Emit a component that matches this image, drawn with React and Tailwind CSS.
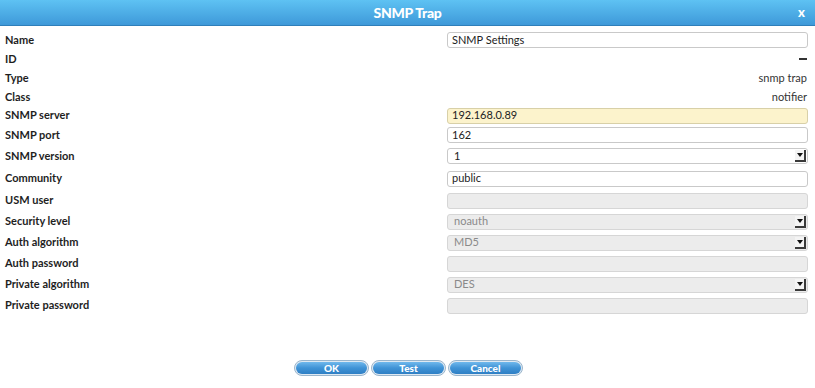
import React from 'react';

const rows = [
  { label: 'Name', h: 'h-[20px]', kind: 'input', value: 'SNMP Settings' },
  { label: 'ID', h: 'h-[18px]', kind: 'dash' },
  { label: 'Type', h: 'h-[20px]', kind: 'text', value: 'snmp trap' },
  { label: 'Class', h: 'h-[18px]', kind: 'text', value: 'notifier' },
  { label: 'SNMP server', h: 'h-[19px]', kind: 'input', value: '192.168.0.89', focus: true },
  { label: 'SNMP port', h: 'h-[20px]', kind: 'input', value: '162' },
  { label: 'SNMP version', h: 'h-[22px]', kind: 'select', value: '1' },
  { label: 'Community', h: 'h-[23px]', kind: 'input', value: 'public' },
  { label: 'USM user', h: 'h-[21px]', kind: 'input', value: '', disabled: true },
  { label: 'Security level', h: 'h-[21px]', kind: 'select', value: 'noauth', disabled: true },
  { label: 'Auth algorithm', h: 'h-[21px]', kind: 'select', value: 'MD5', disabled: true },
  { label: 'Auth password', h: 'h-[21px]', kind: 'input', value: '', disabled: true },
  { label: 'Private algorithm', h: 'h-[21px]', kind: 'select', value: 'DES', disabled: true },
  { label: 'Private password', h: 'h-[21px]', kind: 'input', value: '', disabled: true },
];

const SelectArrow = () => (
  <span className="absolute right-[1px] top-[1px] bottom-[1px] w-[11px] flex items-center justify-center border-r-2 border-b-2 border-[#3a3a3a] bg-[#f4f4f4]">
    <svg width="6" height="4" viewBox="0 0 6 4">
      <path d="M0 0 L6 0 L3 4 Z" fill="#111" />
    </svg>
  </span>
);

const Field = ({ row }) => {
  if (row.kind === 'dash') {
    return (
      <div className="w-full flex justify-end pr-[1px]">
        <span className="w-[8px] h-[2px] bg-[#333]" />
      </div>
    );
  }
  if (row.kind === 'text') {
    return <div className="w-full text-right text-[11px] text-[#333] pr-[1px]">{row.value}</div>;
  }
  const base = 'relative w-full h-[16px] rounded-[3px] border flex items-center pl-[4px] text-[11px]';
  let tone = 'bg-white border-[#c9c9c9] text-[#222]';
  if (row.focus) tone = 'bg-[#fcf3cc] border-[#d8d0a8] text-[#222]';
  if (row.disabled) tone = 'bg-[#ececec] border-[#d6d6d6] text-[#8a8a8a]';
  return (
    <div className={`${base} ${tone}`}>
      <span className={row.kind === 'select' ? 'pl-[2px]' : ''}>{row.value}</span>
      {row.kind === 'select' && <SelectArrow />}
    </div>
  );
};

const DialogButton = ({ children }) => (
  <button className="w-[75px] h-[16px] rounded-full border border-[#9ab5cc] p-[1px] bg-[#dfe9f2]">
    <span className="flex h-full w-full items-center justify-center rounded-full bg-gradient-to-b from-[#6fb8ec] via-[#3f93d6] to-[#2f7fc4] text-white text-[10px] font-black">
      {children}
    </span>
  </button>
);

export default function App() {
  return (
    <div className="w-[815px] h-[388px] bg-white flex flex-col" style={{ fontFamily: 'Lato, "Open Sans", sans-serif' }}>
      <div className="h-[26px] relative flex items-center justify-center bg-gradient-to-b from-[#5ec2f3] to-[#3e99d9] border-b border-[#2f7fba]">
        <span className="text-white text-[14px] font-black tracking-[-0.3px]">SNMP Trap</span>
        <span className="absolute right-[10px] top-[3px] text-white text-[13px] font-black">x</span>
      </div>

      <div className="flex flex-col pt-[4px]">
        {rows.map((row) => (
          <div key={row.label} className={`flex items-center ${row.h}`}>
            <div className="w-[447px] pl-[5px] text-[11px] font-bold text-[#1e1e1e]">{row.label}</div>
            <div className="w-[361px] flex">
              <Field row={row} />
            </div>
          </div>
        ))}
      </div>

      <div className="mt-[44px] flex justify-center gap-[2px] pl-[2px]">
        <DialogButton>OK</DialogButton>
        <DialogButton>Test</DialogButton>
        <DialogButton>Cancel</DialogButton>
      </div>
    </div>
  );
}
